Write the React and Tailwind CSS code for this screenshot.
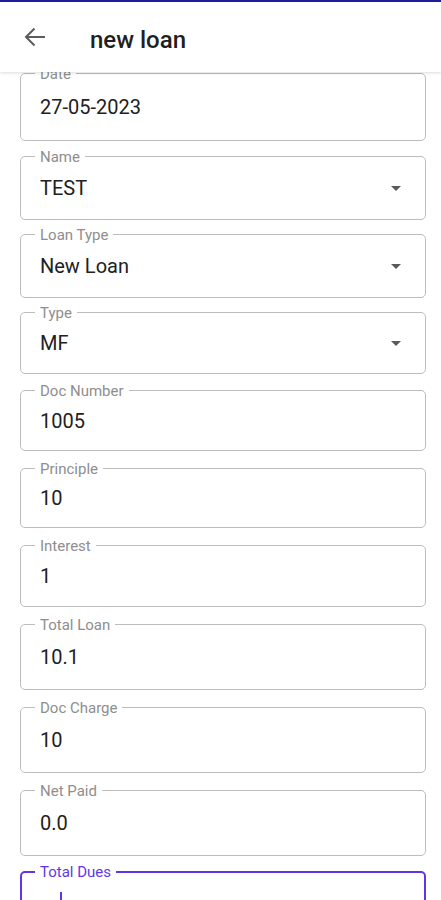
import React from "react";

const fields = [
  { label: "Date", value: "27-05-2023", box: "h-[68px] mt-px" },
  { label: "Name", value: "TEST", box: "h-[64px] mt-[15px]", select: true },
  { label: "Loan Type", value: "New Loan", box: "h-[64px] mt-[14px]", select: true },
  { label: "Type", value: "MF", box: "h-[62px] mt-[14px]", select: true },
  { label: "Doc Number", value: "1005", box: "h-[61px] mt-[16px]" },
  { label: "Principle", value: "10", box: "h-[60px] mt-[17px]" },
  { label: "Interest", value: "1", box: "h-[62px] mt-[17px]" },
  { label: "Total Loan", value: "10.1", box: "h-[66px] mt-[17px]" },
  { label: "Doc Charge", value: "10", box: "h-[66px] mt-[17px]" },
  { label: "Net Paid", value: "0.0", box: "h-[66px] mt-[17px]" },
];

function ArrowBack() {
  return (
    <svg width="22" height="20" viewBox="0 0 22 20" fill="none">
      <path
        d="M21 10H2.5M10.5 1.5L2 10l8.5 8.5"
        stroke="#5c5c5c"
        strokeWidth="2"
        strokeLinejoin="miter"
      />
    </svg>
  );
}

function DropArrow() {
  return (
    <svg width="24" height="24" viewBox="0 0 24 24" className="mr-[17px] shrink-0">
      <path d="M7 10l5 5 5-5z" fill="#5a5a5a" />
    </svg>
  );
}

function Field({ label, value, box, select }) {
  return (
    <div
      className={`relative shrink-0 flex items-center border border-[#bdbdbd] rounded-[5px] ${box}`}
    >
      <span className="absolute top-0 left-[14px] -translate-y-1/2 px-[5px] bg-white text-[15px] leading-none text-[#8e8e8e]">
        {label}
      </span>
      <span className="flex-1 pl-[19px] text-[20px] leading-none text-[#212121]">
        {value}
      </span>
      {select && <DropArrow />}
    </div>
  );
}

export default function App() {
  return (
    <div className="w-[441px] h-[900px] overflow-hidden bg-white flex flex-col font-['Roboto',sans-serif]">
      <div className="h-[2px] shrink-0 bg-[#1d1d9e]" />
      <header className="relative z-10 h-[70px] shrink-0 flex items-center bg-white shadow-[0_1px_3px_rgba(0,0,0,0.14)]">
        <div className="ml-6 mt-[-1px]">
          <ArrowBack />
        </div>
        <h1 className="ml-[44px] mt-[6px] text-[24px] leading-none font-medium text-[#1f1f1f]">
          new loan
        </h1>
      </header>
      <main className="flex-1 overflow-hidden flex flex-col ml-5 mr-[15px]">
        {fields.map((f) => (
          <Field key={f.label} {...f} />
        ))}
        <div className="relative shrink-0 h-[62px] mt-[15px] flex items-center border-2 border-[#6236e8] rounded-[5px]">
          <span className="absolute top-[-1px] left-[13px] -translate-y-1/2 px-[5px] bg-white text-[15px] leading-none text-[#6236e8]">
            Total Dues
          </span>
          <span className="ml-[38px] w-[2px] h-[20px] bg-[#6236e8]" />
        </div>
      </main>
    </div>
  );
}
